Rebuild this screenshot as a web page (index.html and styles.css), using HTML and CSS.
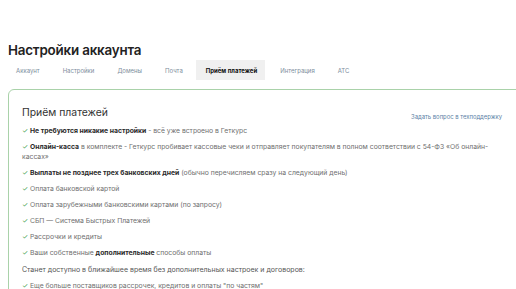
FILE: index.html
```html
<html>
<head>
<meta name="viewport" content="width=device-width, initial-scale=1">
<title>Настройки аккаунта</title>
<link rel="stylesheet" href="styles.css">
</head>
<body>
<h1 class="title">Настройки аккаунта</h1>
<nav class="tabs">
  <span class="tab">Аккаунт</span>
  <span class="tab">Настройки</span>
  <span class="tab">Домены</span>
  <span class="tab">Почта</span>
  <span class="tab active">Приём платежей</span>
  <span class="tab">Интеграция</span>
  <span class="tab">АТС</span>
</nav>
<div class="card">
  <div class="card-head">
    <h2>Приём платежей</h2>
    <a class="help" href="#">Задать вопрос в техподдержку</a>
  </div>
  <ul class="list">
    <li><b>Не требуются никакие настройки</b> - всё уже встроено в Геткурс</li>
    <li><b>Онлайн-касса</b> в комплекте - Геткурс пробивает кассовые чеки и отправляет покупателям в полном соответствии с 54-ФЗ «Об онлайн-кассах»</li>
    <li><b>Выплаты не позднее трех банковских дней</b> (обычно перечисляем сразу на следующий день)</li>
    <li>Оплата банковской картой</li>
    <li>Оплата зарубежными банковскими картами (по запросу)</li>
    <li>СБП — Система Быстрых Платежей</li>
    <li>Рассрочки и кредиты</li>
    <li>Ваши собственные <b>дополнительные</b> способы оплаты</li>
  </ul>
  <p class="soon">Станет доступно в ближайшее время без дополнительных настроек и договоров:</p>
  <ul class="list">
    <li>Еще больше поставщиков рассрочек, кредитов и оплаты "по частям"</li>
  </ul>
</div>
</body>
</html>
```

FILE: styles.css
```css
html, body {
  margin: 0;
  padding: 0;
}

body {
  font-family: Inter, "Noto Sans", sans-serif;
  background: #fff;
  color: #333;
  padding: 0 8px;
  overflow: hidden;
  height: 289px;
}

.title {
  margin: 40px 0 0;
  font-size: 13.4px;
  line-height: 20px;
  font-weight: 600;
  color: #222;
  letter-spacing: -0.2px;
}

.tabs {
  display: flex;
  height: 20px;
  align-items: stretch;
  margin-left: -2px;
}

.tab {
  display: flex;
  align-items: center;
  padding: 0 8px 0 10px;
  margin-right: 5px;
  font-size: 6px;
  color: #7d8d9c;
}

.tab.active {
  background: #f0f0f0;
  color: #111;
  font-weight: 700;
}

.card {
  margin-top: 9px;
  width: calc(100% + 30px);
  border: 1px solid #a9d2a9;
  border-radius: 6px;
  padding: 15px 31px 0 13px;
  box-sizing: border-box;
  height: 260px;
}

.card-head {
  display: flex;
  justify-content: space-between;
  align-items: flex-end;
}

.card-head h2 {
  margin: 0;
  font-size: 10.4px;
  line-height: 16px;
  font-weight: 400;
  color: #333;
}

.help {
  font-size: 5.9px;
  color: #5b7fa6;
  text-decoration: none;
  padding-bottom: 1px;
  margin-right: 4px;
}

.list {
  list-style: none;
  margin: 5px 0 0;
  padding: 0;
}

.list li {
  font-size: 6.8px;
  line-height: 9.5px;
  color: #6f6f6f;
  margin-bottom: 6.6px;
}

.list li::before {
  content: "✓ ";
  color: #3d9a4a;
}

.list b {
  color: #2a2a2a;
  font-weight: 700;
}

.soon {
  margin: 0 0 6px;
  font-size: 7px;
  line-height: 10px;
  color: #555;
  padding-top: 1px;
}
```
